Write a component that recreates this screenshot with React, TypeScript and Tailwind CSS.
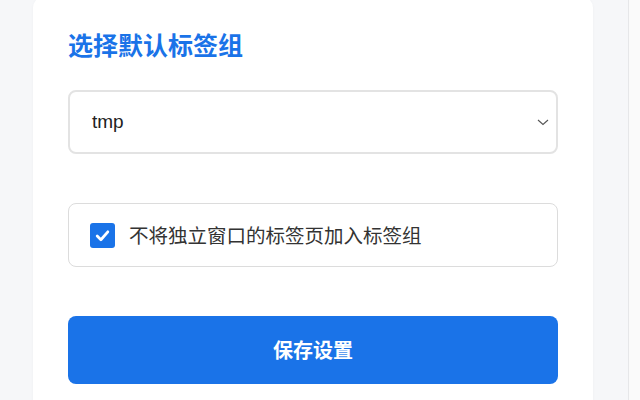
import React from "react";

export default function App() {
  const cjk = { fontFamily: '"Noto Sans CJK SC", "Noto Sans", sans-serif' };
  return (
    <div className="flex h-[400px] w-[640px] overflow-hidden bg-[#f6f7f9]" style={cjk}>
      <div className="flex-1">
        <div className="ml-[33px] -mt-1 w-[560px] rounded-xl bg-white px-[35px] pt-[32px] pb-10 shadow-[0_1px_3px_rgba(0,0,0,0.04)]">
          <h2 className="text-[25px] font-bold leading-[32px] text-[#1a73e8]">选择默认标签组</h2>
          <div className="mt-[30px] flex h-[64px] items-center justify-between rounded-[8px] border-2 border-[#e3e3e3] pl-[22px] pr-[4px]">
            <span className="text-[19px] text-[#222]" style={{ fontFamily: '"Liberation Sans", Arial, sans-serif' }}>tmp</span>
            <svg width="14" height="10" viewBox="0 0 14 10" className="mr-[2px]">
              <path d="M2 3 L7 7.5 L12 3" fill="none" stroke="#555" strokeWidth="1.1" />
            </svg>
          </div>
          <div className="mt-[49px] flex h-[64px] items-center rounded-[8px] border border-[#dcdcdc] pl-[21px]">
            <div className="flex h-[25px] w-[25px] items-center justify-center rounded-[3px] bg-[#1a73e8]">
              <svg width="17" height="17" viewBox="0 0 16 16">
                <path d="M3 8.5 L6.5 12 L13 4.5" fill="none" stroke="#fff" strokeWidth="2.6" strokeLinecap="round" strokeLinejoin="round" />
              </svg>
            </div>
            <span className="ml-[14px] text-[19.5px] text-[#333]">不将独立窗口的标签页加入标签组</span>
          </div>
          <button className="mt-[49px] flex h-[68px] w-full items-center justify-center rounded-[8px] bg-[#1a73e8] text-[20px] font-bold text-white">
            保存设置
          </button>
        </div>
      </div>
      <div className="w-[12px] border-l border-[#e6e7e9] bg-[#fafafa]" />
    </div>
  );
}
